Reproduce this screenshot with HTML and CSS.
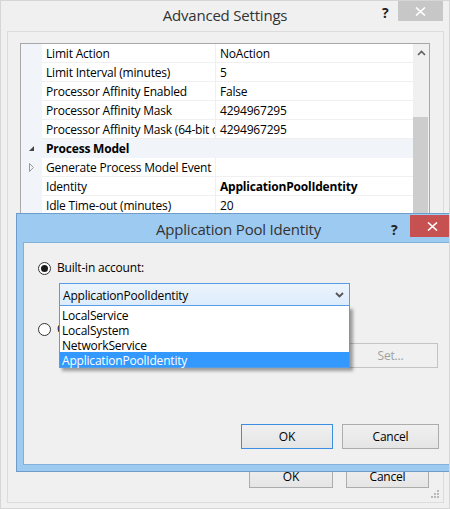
FILE: index.html
```html
<!DOCTYPE html>
<html>
<head>
<meta charset="utf-8">
<link rel="stylesheet" href="styles.css">
</head>
<body>
<div class="window">
  <div class="titlebar">
    <span class="title">Advanced Settings</span>
    <span class="cap-help">?</span>
    <span class="cap-close gray"><svg width="11" height="9" viewBox="0 0 11 9"><path d="M1 0.5 L10 8.5 M10 0.5 L1 8.5" stroke="#fff" stroke-width="1.6"/></svg></span>
  </div>
  <div class="panel">
    <div class="grid">
      <div class="rows">
        <div class="row"><div class="gut"></div><div class="name">Limit Action</div><div class="val">NoAction</div></div>
        <div class="row"><div class="gut"></div><div class="name">Limit Interval (minutes)</div><div class="val">5</div></div>
        <div class="row"><div class="gut"></div><div class="name">Processor Affinity Enabled</div><div class="val">False</div></div>
        <div class="row"><div class="gut"></div><div class="name">Processor Affinity Mask</div><div class="val">4294967295</div></div>
        <div class="row"><div class="gut"></div><div class="name">Processor Affinity Mask (64-bit option)</div><div class="val">4294967295</div></div>
        <div class="row cat"><div class="gut"><svg width="7" height="7" viewBox="0 0 7 7"><path d="M6 1 L6 6 L1 6 Z" fill="#444"/></svg></div><div class="name">Process Model</div></div>
        <div class="row"><div class="gut"><svg width="7" height="9" viewBox="0 0 7 9"><path d="M1.5 0.5 L5.5 4.5 L1.5 8.5 Z" fill="none" stroke="#999"/></svg></div><div class="name">Generate Process Model Event Log Entry</div><div class="val"></div></div>
        <div class="row"><div class="gut"></div><div class="name">Identity</div><div class="val bold">ApplicationPoolIdentity</div></div>
        <div class="row"><div class="gut"></div><div class="name">Idle Time-out (minutes)</div><div class="val">20</div></div>
        <div class="row"><div class="gut"></div><div class="name">Idle Time-out Action</div><div class="val">Terminate</div></div>
        <div class="row"><div class="gut"></div><div class="name">Load User Profile</div><div class="val">True</div></div>
        <div class="row"><div class="gut"></div><div class="name">Maximum Worker Processes</div><div class="val">1</div></div>
        <div class="row"><div class="gut"></div><div class="name">Ping Enabled</div><div class="val">True</div></div>
      </div>
      <div class="scrollbar">
        <div class="sb-arrow"><svg width="9" height="6" viewBox="0 0 9 6"><path d="M1 5 L4.5 1.5 L8 5" fill="none" stroke="#606060" stroke-width="1.6"/></svg></div>
        <div class="sb-track"><div class="sb-thumb"></div></div>
      </div>
    </div>
    <div class="panel-buttons">
      <button class="btn ok-back">OK</button>
      <button class="btn cancel-back">Cancel</button>
    </div>
    <div class="grip">
      <svg width="8" height="8" viewBox="0 0 8 8" fill="#b8b8b8"><rect x="6" y="0" width="2" height="2"/><rect x="3" y="3" width="2" height="2"/><rect x="6" y="3" width="2" height="2"/><rect x="0" y="6" width="2" height="2"/><rect x="3" y="6" width="2" height="2"/><rect x="6" y="6" width="2" height="2"/></svg>
    </div>
  </div>

  <div class="dialog">
    <div class="dlg-title">
      <span class="title">Application Pool Identity</span>
      <span class="dlg-help">?</span>
      <span class="cap-close red"><svg width="11" height="9" viewBox="0 0 11 9"><path d="M1 0.5 L10 8.5 M10 0.5 L1 8.5" stroke="#fff" stroke-width="1.6"/></svg></span>
    </div>
    <div class="dlg-body">
      <div class="radio-row first">
        <span class="radio checked"></span>
        <span class="radio-label">Built-in account:</span>
      </div>
      <div class="combo-wrap">
        <div class="combo">
          <span>ApplicationPoolIdentity</span>
          <svg width="9" height="6" viewBox="0 0 9 6"><path d="M1 1 L4.5 4.5 L8 1" fill="none" stroke="#555" stroke-width="1.8"/></svg>
        </div>
        <ul class="droplist">
          <li>LocalService</li>
          <li>LocalSystem</li>
          <li>NetworkService</li>
          <li class="sel">ApplicationPoolIdentity</li>
        </ul>
      </div>
      <div class="radio-row second">
        <span class="radio"></span>
        <span class="radio-label">Custom account:</span>
      </div>
      <div class="custom-row">
        <div class="textbox"></div>
        <button class="btn set" disabled>Set...</button>
      </div>
      <div class="dlg-buttons">
        <button class="btn ok">OK</button>
        <button class="btn cancel">Cancel</button>
      </div>
    </div>
  </div>
</div>
</body>
</html>
```

FILE: styles.css
```css
* { box-sizing: border-box; }
html, body { margin: 0; padding: 0; }
body {
  width: 450px;
  height: 509px;
  overflow: hidden;
  font-family: "Open Sans", "Noto Sans", sans-serif;
  font-size: 12px;
  letter-spacing: -0.2px;
  color: #000;
  background: #f0f0f0;
}
.window {
  position: relative;
  width: 450px;
  height: 509px;
  border: 1px solid #d6d6d6;
  background: #f0f0f0;
  overflow: hidden;
}
.titlebar {
  height: 30px;
  display: flex;
  justify-content: center;
  align-items: center;
}
.titlebar .title {
  font-size: 15px;
  color: #333;
  margin-top: -2px;
}
.cap-help {
  position: absolute;
  left: 381px;
  top: 2px;
  font-weight: bold;
  font-size: 14px;
  color: #222;
}
.cap-close {
  position: absolute;
  width: 45px;
  height: 20px;
  display: flex;
  align-items: center;
  justify-content: center;
}
.cap-close.gray { left: 397px; top: 0; background: #c7c7c7; }

.panel {
  position: relative;
  margin: 0 5px 0 6px;
  height: 472px;
  border: 1px solid #dcdcdc;
  padding: 11px 14px 0 12px;
}
.grid {
  width: 410px;
  height: 412px;
  border: 1px solid #a8a8a8;
  background: #fff;
  display: flex;
}
.rows {
  width: 392px;
  overflow: hidden;
}
.row {
  display: flex;
  height: 19px;
  line-height: 20px;
}
.gut {
  width: 21px;
  flex: none;
  background: #f1f4f9;
  display: flex;
  align-items: center;
  justify-content: center;
}
.name, .val {
  white-space: nowrap;
  overflow: hidden;
  border-bottom: 1px solid #f0f0f0;
}
.name {
  width: 174px;
  flex: none;
  padding-left: 4px;
  border-right: 1px solid #f0f0f0;
}
.val {
  flex: 1;
  padding-left: 4px;
}
.bold { font-weight: bold; }
.row.cat { background: #f1f4f9; }
.row.cat .name {
  font-weight: bold;
  border: 0;
  width: auto;
  flex: 1;
}
.scrollbar {
  width: 16px;
  background: #f0f0f0;
  display: flex;
  flex-direction: column;
}
.sb-arrow {
  height: 17px;
  display: flex;
  align-items: center;
  justify-content: center;
}
.sb-track { flex: 1; padding-top: 56px; }
.sb-thumb { width: 15px; height: 200px; background: #cdcdcd; }

.panel-buttons {
  display: flex;
  justify-content: flex-end;
  gap: 13px;
  margin-top: 10px;
}
.btn {
  font-family: "Open Sans", "Noto Sans", sans-serif;
  font-size: 12px;
  letter-spacing: -0.2px;
  color: #000;
  background: linear-gradient(#f0f0f0, #e5e5e5);
  border: 1px solid #acacac;
  padding: 0;
  height: 23px;
  flex: none;
}
.ok-back { width: 84px; }
.cancel-back { width: 83px; }
.grip {
  position: absolute;
  right: 4px;
  bottom: 4px;
  line-height: 0;
}

.dialog {
  position: absolute;
  left: 15px;
  top: 212px;
  width: 445px;
  height: 259px;
  border: 1px solid #6f9dc9;
  background: #9dcaf0;
  padding: 0 6px 6px 6px;
  display: flex;
  flex-direction: column;
}
.dlg-title {
  height: 28px;
  display: flex;
  justify-content: center;
  align-items: center;
  position: relative;
}
.dlg-title .title {
  font-size: 15px;
  color: #333;
  margin-top: 1px;
}
.dlg-help {
  position: absolute;
  left: 368px;
  top: 6px;
  font-weight: bold;
  font-size: 14px;
  color: #222;
}
.cap-close.red {
  left: 387px;
  top: 1px;
  width: 45px;
  height: 22px;
  background: #c75050;
}
.dlg-body {
  flex: 1;
  background: #f0f0f0;
  border: 1px solid #83b0d9;
  padding: 0 14px 0 14px;
}
.radio-row {
  display: flex;
  align-items: center;
  height: 14px;
  gap: 6px;
}
.radio-row.first { margin-top: 18px; }
.radio-row.second { margin-top: 16px; }
.radio {
  width: 13px;
  height: 13px;
  border-radius: 50%;
  border: 1px solid #333;
  background: #fff;
  position: relative;
  flex: none;
}
.radio.checked::after {
  content: "";
  position: absolute;
  left: 2px;
  top: 2px;
  width: 7px;
  height: 7px;
  border-radius: 50%;
  background: #1a1a1a;
}
.radio-label { line-height: 14px; }

.combo-wrap {
  position: relative;
  margin: 8px 0 0 21px;
  width: 291px;
  z-index: 2;
}
.combo {
  height: 23px;
  border: 1px solid #569de5;
  background: linear-gradient(#ecf4fc, #dcecfc);
  display: flex;
  align-items: center;
  justify-content: space-between;
  padding: 1px 5px 0 3px;
}
.droplist {
  position: absolute;
  left: 0;
  top: 23px;
  width: 291px;
  margin: 0;
  padding: 1px 0 0 0;
  list-style: none;
  background: #fff;
  border: 1px solid #569de5;
  border-top: 0;
  box-shadow: 3px 3px 3px rgba(0, 0, 0, 0.35);
}
.droplist li {
  height: 15px;
  line-height: 17px;
  padding-left: 2px;
}
.droplist li.sel {
  background: #3399ff;
  color: #fff;
}
.custom-row {
  display: flex;
  gap: 8px;
  margin: 7px 1px 0 21px;
  height: 25px;
}
.textbox {
  flex: 1;
  border: 1px solid #d0d0d0;
  background: #f0f0f0;
}
.btn.set {
  width: 95px;
  height: 25px;
  color: #a0a0a0;
  border-color: #c4c4c4;
  background: #f0f0f0;
}
.dlg-buttons {
  display: flex;
  justify-content: flex-end;
  gap: 9px;
  margin-top: 56px;
}
.btn.ok { width: 92px; height: 25px; border-color: #3c8ee0; }
.btn.cancel { width: 97px; height: 25px; }
```
